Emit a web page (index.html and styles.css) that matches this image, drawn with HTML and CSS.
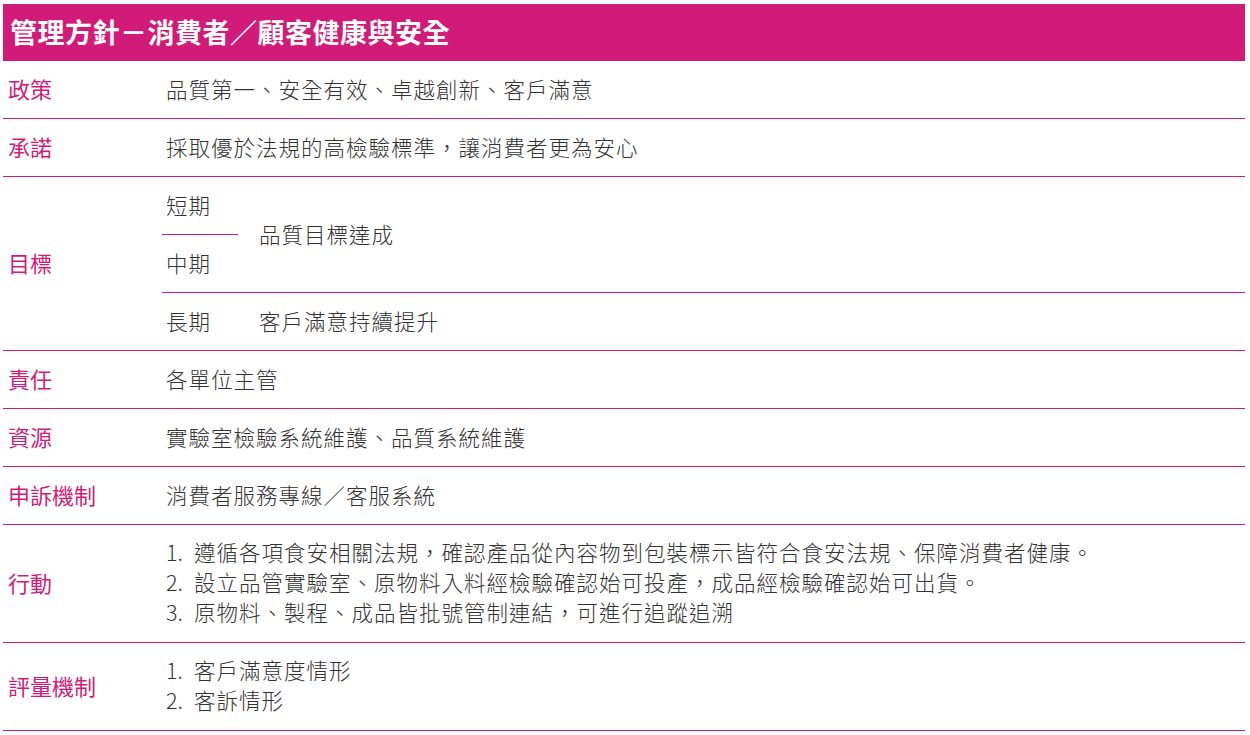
FILE: index.html
```html
<!DOCTYPE html>
<html lang="zh-Hant">
<head>
<meta charset="utf-8">
<title>管理方針</title>
<link rel="stylesheet" href="styles.css">
</head>
<body>
<div class="sheet">
  <div class="title">管理方針－消費者／顧客健康與安全</div>
  <div class="row">
    <div class="label">政策</div>
    <div class="content">品質第一、安全有效、卓越創新、客戶滿意</div>
  </div>
  <div class="row">
    <div class="label">承諾</div>
    <div class="content">採取優於法規的高檢驗標準，讓消費者更為安心</div>
  </div>
  <div class="row row-goal">
    <div class="label">目標</div>
    <div class="goal">
      <div class="term term-short">短期</div>
      <div class="term term-mid">中期</div>
      <div class="aim aim-span">品質目標達成</div>
      <div class="long">
        <div class="term">長期</div>
        <div class="aim">客戶滿意持續提升</div>
      </div>
    </div>
  </div>
  <div class="row">
    <div class="label">責任</div>
    <div class="content">各單位主管</div>
  </div>
  <div class="row">
    <div class="label">資源</div>
    <div class="content">實驗室檢驗系統維護、品質系統維護</div>
  </div>
  <div class="row">
    <div class="label">申訴機制</div>
    <div class="content">消費者服務專線／客服系統</div>
  </div>
  <div class="row row-action">
    <div class="label">行動</div>
    <ol class="content list">
      <li><span class="num">1.</span><span>遵循各項食安相關法規，確認產品從內容物到包裝標示皆符合食安法規、保障消費者健康。</span></li>
      <li><span class="num">2.</span><span>設立品管實驗室、原物料入料經檢驗確認始可投產，成品經檢驗確認始可出貨。</span></li>
      <li><span class="num">3.</span><span>原物料、製程、成品皆批號管制連結，可進行追蹤追溯</span></li>
    </ol>
  </div>
  <div class="row row-eval">
    <div class="label">評量機制</div>
    <ol class="content list">
      <li><span class="num">1.</span><span>客戶滿意度情形</span></li>
      <li><span class="num">2.</span><span>客訴情形</span></li>
    </ol>
  </div>
</div>
</body>
</html>
```

FILE: styles.css
```css
html, body {
  margin: 0;
  padding: 0;
  background: #ffffff;
}

body {
  font-family: "Noto Sans CJK TC", "Noto Sans CJK SC", "Noto Sans", sans-serif;
  color: #333333;
}

.sheet {
  width: 1242px;
  margin: 4px 0 0 3px;
}

.title {
  height: 57px;
  background: #d21b78;
  color: #ffffff;
  font-size: 27px;
  font-weight: 700;
  line-height: 55px;
  padding-left: 7px;
  letter-spacing: 0.5px;
}

.row {
  display: grid;
  grid-template-columns: 159px 1fr;
  height: 58px;
  box-sizing: border-box;
  border-bottom: 1px solid #d21b78;
  align-items: center;
  padding-bottom: 3px;
}

.label {
  padding-left: 5px;
  color: #d21b78;
  font-size: 22px;
  font-weight: 400;
}

.content {
  padding-left: 4px;
  font-size: 21.5px;
  font-weight: 300;
  letter-spacing: 1px;
}

.row-goal {
  height: 174px;
  align-items: stretch;
  padding-bottom: 0;
}
.row-goal .label {
  align-self: center;
  padding-bottom: 3px;
}

.goal {
  display: grid;
  grid-template-columns: 76px 1fr;
  grid-template-rows: 58px 57px 58px;
  font-size: 21.5px;
  font-weight: 300;
  letter-spacing: 1px;
}

.term {
  padding-left: 4px;
  padding-bottom: 3px;
  display: flex;
  align-items: center;
}

.term-short {
  grid-column: 1;
  grid-row: 1;
  border-bottom: 1px solid #d21b78;
}

.term-mid {
  grid-column: 1;
  grid-row: 2;
}

.aim {
  padding-left: 21px;
  padding-bottom: 3px;
  display: flex;
  align-items: center;
}

.aim-span {
  grid-column: 2;
  grid-row: 1 / 3;
}

.long {
  grid-column: 1 / 3;
  grid-row: 3;
  display: grid;
  grid-template-columns: 76px 1fr;
  border-top: 1px solid #d21b78;
}

.row-action {
  height: 118px;
}

.row-eval {
  height: 88px;
}

.list {
  list-style: none;
  margin: 0;
  line-height: 30px;
}

.list li {
  display: flex;
}

.num {
  width: 28px;
  flex: none;
  letter-spacing: 0;
}
```
